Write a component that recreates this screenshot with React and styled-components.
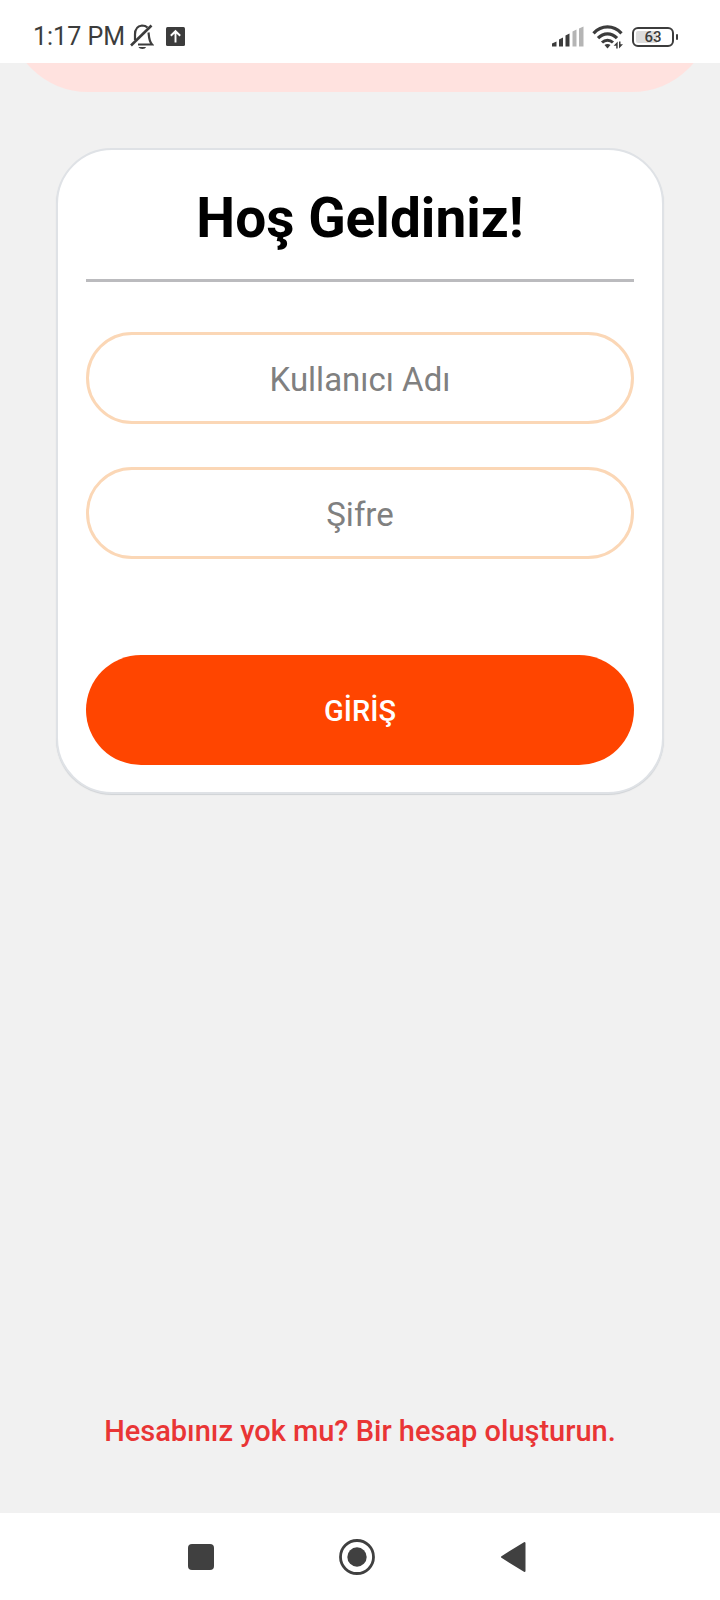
import React from "react";
import styled, { createGlobalStyle } from "styled-components";

const GlobalStyle = createGlobalStyle`
  * { box-sizing: border-box; }
  body {
    margin: 0;
    background: #f1f1f1;
    font-family: Roboto, "Noto Sans", sans-serif;
  }
`;

const Screen = styled.div`
  min-height: 100vh;
  display: flex;
  flex-direction: column;
`;

const StatusBar = styled.header`
  height: 63px;
  padding: 10px 42px 0 33px;
  display: flex;
  align-items: center;
  justify-content: space-between;
  background: #fff;
  color: #3c3c3c;
`;

const StatusGroup = styled.div`
  display: flex;
  align-items: center;
  gap: ${(p) => p.$gap}px;
`;

const Clock = styled.time`
  font-size: 25px;
  line-height: 28px;
`;

const Icon = styled.svg`
  display: block;
  flex: none;
`;

const Main = styled.main`
  flex: 1;
  display: flex;
  flex-direction: column;
`;

const BannerClip = styled.div`
  height: 29px;
  padding: 0 8px;
  display: flex;
  align-items: flex-end;
  overflow: hidden;
`;

const Banner = styled.div`
  flex: 1;
  height: 160px;
  border-radius: 80px;
  background: #ffe2df;
`;

const Card = styled.form`
  margin: 56px 56px 0;
  padding: 28px 28px 27px;
  display: flex;
  flex-direction: column;
  border: 2px solid #dfe2e6;
  border-radius: 56px;
  background: #fff;
  box-shadow: 0 1px 1px #cfd2d5;
`;

const Title = styled.h1`
  margin: 0;
  font-size: 55px;
  line-height: 80px;
  font-weight: 700;
  text-align: center;
  color: #000;
`;

const Divider = styled.hr`
  width: 100%;
  height: 3px;
  margin: 21px 0 50px;
  border: 0;
  background: #bbbbbe;
`;

const Fields = styled.div`
  display: flex;
  flex-direction: column;
  gap: 43px;
`;

const TextInput = styled.input`
  display: block;
  width: 100%;
  height: 92px;
  padding: 2px 40px 0;
  border: 3px solid #fbd7b6;
  border-radius: 46px;
  background: #fff;
  font: 400 33px/40px Roboto, "Noto Sans", sans-serif;
  text-align: center;
  color: #222;
  outline: none;

  &::placeholder {
    color: #808080;
    opacity: 1;
  }
`;

const SubmitButton = styled.button`
  height: 110px;
  margin-top: 96px;
  padding: 2px 20px 0;
  border: 0;
  border-radius: 55px;
  background: #ff4500;
  color: #fff;
  font: 500 29px/40px Roboto, "Noto Sans", sans-serif;
  cursor: pointer;
`;

const SignUp = styled.p`
  margin: auto 0 0;
  padding: 40px 20px 57px;
  text-align: center;
  line-height: 40px;
`;

const SignUpLink = styled.a`
  font-size: 29px;
  font-weight: 500;
  color: #e93535;
  text-decoration: none;
`;

const NavBar = styled.nav`
  height: 87px;
  padding: 0 180px 0 174px;
  display: flex;
  align-items: center;
  justify-content: space-between;
  background: #fff;
`;

const NavButton = styled.button`
  padding: 4px;
  border: 0;
  background: none;
  color: #404040;
  cursor: pointer;
`;

const BellOffIcon = () => (
  <Icon width="24" height="26" viewBox="0 0 24 26" fill="none" stroke="currentColor" strokeWidth="2.2" aria-hidden="true">
    <path d="M5 16V10.500C5 5.500 7.500 2 12 1.500C14.300 1.500 16.200 2.200 17.500 3.500" />
    <path d="M18.500 8.500C19 11 18.500 16.500 22 20.500H8" />
    <path d="M1 21.500L21.500 1.500" strokeWidth="2.600" />
    <path d="M8.500 23H16C15.500 25.600 9.500 25.600 8.500 23Z" fill="currentColor" stroke="none" />
  </Icon>
);

const UploadIcon = () => (
  <Icon width="19" height="19" viewBox="0 0 19 19" aria-hidden="true">
    <rect width="19" height="19" rx="1.500" fill="currentColor" />
    <path d="M9.500 15.500V4.500M4.800 8.800L9.500 4.200L14.200 8.800" fill="none" stroke="#fff" strokeWidth="1.900" />
  </Icon>
);

const SignalIcon = () => (
  <Icon width="32" height="21" viewBox="0 0 32 21" fill="currentColor" aria-hidden="true">
    <path d="M0 17.500L4.500 15.500V20.500H0Z" />
    <path d="M7 13.500L11 11.500V20.500H7Z" />
    <path d="M13.500 9.500L17.500 7.500V20.500H13.500Z" />
    <path d="M20.500 5.500L24.500 3.500V20.500H20.500Z" fill="#b5b5b5" />
    <path d="M27 2.500L31.500 0.500V20.500H27Z" fill="#b5b5b5" />
  </Icon>
);

const WifiIcon = () => (
  <Icon width="32" height="25" viewBox="0 0 32 25" fill="none" stroke="currentColor" aria-hidden="true">
    <path d="M1.500 9.300C9.500 0.800 21.500 0.800 29.500 9.300" strokeWidth="3.200" />
    <path d="M6 14.200C11.500 8.400 19.500 8.400 25 14.200" strokeWidth="3.200" />
    <path d="M10 18.500C13.200 15.400 17.800 15.400 21 18.500" strokeWidth="3" />
    <path d="M12.500 21C14.300 19.500 16.700 19.500 18.500 21L15.500 24.500Z" fill="currentColor" stroke="none" />
    <path d="M25.700 17.500V24.500H24.200V21.800H21.600ZM27 24.500V17.500H28.500V20.200H31Z" fill="currentColor" stroke="none" />
  </Icon>
);

const Battery = styled.div`
  display: flex;
  align-items: center;
  gap: 2px;

  &::after {
    content: "";
    width: 2px;
    height: 6px;
    border-radius: 1px;
    background: #3c3c3c;
  }
`;

const BatteryBody = styled.span`
  width: 42px;
  height: 20px;
  border: 2px solid #3c3c3c;
  border-radius: 6px;
  padding: 2px;
  background: linear-gradient(90deg, #dcdcdc 63%, #fff 63%) content-box;
  display: flex;
  align-items: center;
  justify-content: center;
  font-size: 15px;
  line-height: 16px;
  font-weight: 500;
`;

export default function App() {
  return (
    <Screen>
      <GlobalStyle />
      <StatusBar>
        <StatusGroup $gap={12}>
          <StatusGroup $gap={5}>
            <Clock>1:17 PM</Clock>
            <BellOffIcon />
          </StatusGroup>
          <UploadIcon />
        </StatusGroup>
        <StatusGroup $gap={8}>
          <SignalIcon />
          <WifiIcon />
          <Battery>
            <BatteryBody>63</BatteryBody>
          </Battery>
        </StatusGroup>
      </StatusBar>

      <Main>
        <BannerClip>
          <Banner />
        </BannerClip>

        <Card onSubmit={(e) => e.preventDefault()}>
          <Title>Hoş Geldiniz!</Title>
          <Divider />
          <Fields>
            <TextInput type="text" aria-label="Kullanıcı Adı" placeholder="Kullanıcı Adı" />
            <TextInput type="password" aria-label="Şifre" placeholder="Şifre" />
          </Fields>
          <SubmitButton type="submit">GİRİŞ</SubmitButton>
        </Card>

        <SignUp>
          <SignUpLink href="#">Hesabınız yok mu? Bir hesap oluşturun.</SignUpLink>
        </SignUp>
      </Main>

      <NavBar>
        <NavButton type="button" aria-label="Son uygulamalar">
          <Icon width="36" height="36" viewBox="0 0 36 36" fill="currentColor">
            <rect x="10" y="5" width="26" height="26" rx="4" />
          </Icon>
        </NavButton>
        <NavButton type="button" aria-label="Ana ekran">
          <Icon width="36" height="36" viewBox="0 0 36 36" fill="currentColor">
            <circle cx="18" cy="18" r="16.500" fill="none" stroke="currentColor" strokeWidth="2.800" />
            <circle cx="18" cy="18" r="9.700" />
          </Icon>
        </NavButton>
        <NavButton type="button" aria-label="Geri">
          <Icon width="36" height="36" viewBox="0 0 36 36" fill="currentColor" stroke="currentColor" strokeWidth="2" strokeLinejoin="round">
            <path d="M2 18L24.500 4V32Z" />
          </Icon>
        </NavButton>
      </NavBar>
    </Screen>
  );
}
